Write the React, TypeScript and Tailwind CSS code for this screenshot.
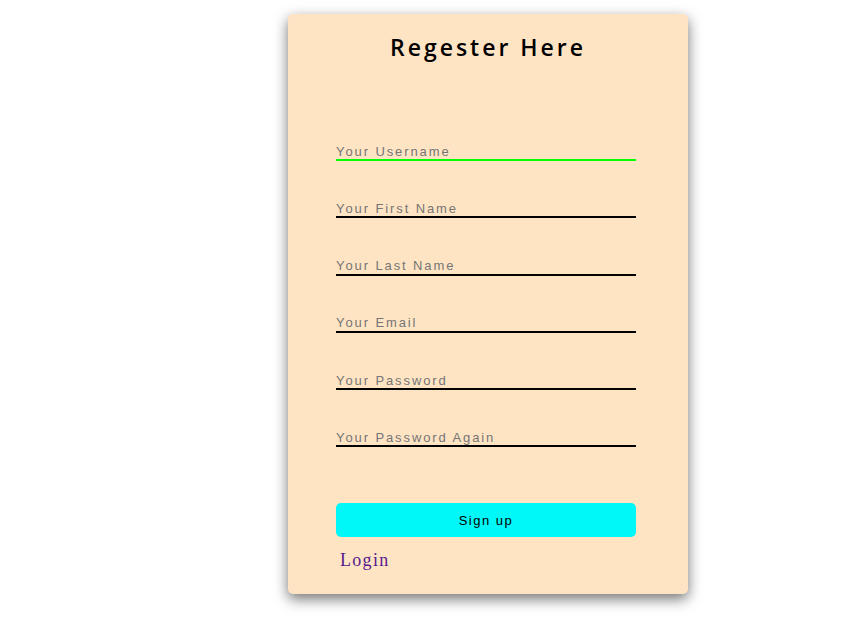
import React from "react";

const fields = [
  { name: "username", placeholder: "Your Username", type: "text" },
  { name: "firstName", placeholder: "Your First Name", type: "text" },
  { name: "lastName", placeholder: "Your Last Name", type: "text" },
  { name: "email", placeholder: "Your Email", type: "email" },
  { name: "password", placeholder: "Your Password", type: "password" },
  { name: "password2", placeholder: "Your Password Again", type: "password" },
];

const App = () => {
  return (
    <div className="min-h-screen bg-white pl-[288px] pt-[14px]">
      <div className="w-[400px] h-[580px] bg-[#ffe4c4] rounded-[5px] shadow-[0_5px_14px_rgba(0,0,0,0.55)] flex flex-col">
        <h1 className="mt-[16px] text-center text-[23px] leading-[34px] font-semibold tracking-[3px] text-black font-['Open_Sans',sans-serif]">
          Regester Here
        </h1>
        <form className="mt-[70px] px-[48px] flex flex-col gap-[30.25px]">
          {fields.map((f, i) => (
            <input
              key={f.name}
              type={f.type}
              name={f.name}
              autoFocus={i === 0}
              placeholder={f.placeholder}
              className={
                i === 0
                  ? "w-[300px] h-[27px] pt-[9px] bg-transparent outline-none border-b-2 border-[#00ff00] text-[13px] tracking-[1.9px] placeholder:text-[#757575] font-['Liberation_Sans',Arial,sans-serif]"
                  : "w-[300px] h-[27px] pt-[9px] bg-transparent outline-none border-b-2 border-black text-[13px] tracking-[1.9px] placeholder:text-[#757575] font-['Liberation_Sans',Arial,sans-serif]"
              }
            />
          ))}
        </form>
        <div className="mt-[56px] px-[48px] flex flex-col">
          <button className="w-[300px] h-[34px] bg-[#00f8f8] rounded-[5px] text-[13px] tracking-[1.5px] text-black font-['Liberation_Sans',Arial,sans-serif]">
            Sign up
          </button>
          <a
            href="#"
            className="mt-[10px] ml-[4px] text-[18px] leading-[26px] tracking-[1.3px] text-[#551a8b] font-['Liberation_Serif','Times_New_Roman',serif]"
          >
            Login
          </a>
        </div>
      </div>
    </div>
  );
};

export default App;
